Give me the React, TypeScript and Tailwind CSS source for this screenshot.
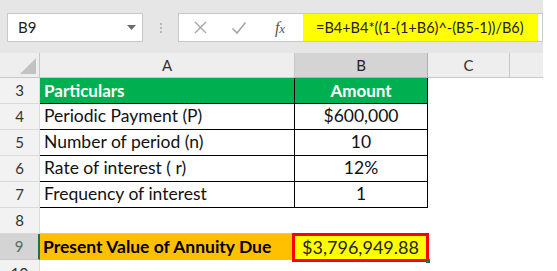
// Excel-style sheet: present value of an annuity due.

const rowHead =
  "flex items-center justify-center border-r border-b border-[#dadada] bg-[#f2f2f2] text-[15px] text-[#333]";

function Check() {
  return (
    <svg width="16" height="14" viewBox="0 0 16 14" fill="none" stroke="#a6a6a6" strokeWidth="1.6">
      <path d="M1.5 7.5 L6 12 L14.5 1.5" />
    </svg>
  );
}

function Cross() {
  return (
    <svg width="13" height="13" viewBox="0 0 13 13" fill="none" stroke="#a6a6a6" strokeWidth="1.4">
      <path d="M1 1 L12 12 M12 1 L1 12" />
    </svg>
  );
}

const rows = [
  { n: "4", a: "Periodic Payment (P)", b: "$600,000" },
  { n: "5", a: "Number of period (n)", b: "10" },
  { n: "6", a: "Rate of interest ( r)", b: "12%" },
  { n: "7", a: "Frequency of interest", b: "1" },
];

export default function App() {
  return (
    <div className="h-[271px] w-[557px] overflow-hidden bg-white font-['Lato','Liberation_Sans',sans-serif]">
      <div className="w-[543px]">
        {/* formula bar */}
        <div className="flex h-[53px] items-start bg-[#e6e6e6] pl-[7px] pt-[13px]">
          <div className="flex h-[29px] w-[136px] items-center justify-between border border-[#c8c8c8] bg-white pl-[10px] pr-[6px]">
            <span className="text-[15px] text-[#222]">B9</span>
            <svg width="9" height="5" viewBox="0 0 9 5">
              <path d="M0 0 H9 L4.5 5 Z" fill="#6b6b6b" />
            </svg>
          </div>
          <div className="flex h-[29px] w-[35px] flex-col items-center justify-center gap-[2px]">
            <span className="h-[2px] w-[2px] bg-[#b8b8b8]" />
            <span className="h-[2px] w-[2px] bg-[#b8b8b8]" />
            <span className="h-[2px] w-[2px] bg-[#b8b8b8]" />
          </div>
          <div className="flex h-[29px] w-[365px] items-center border border-[#c8c8c8] bg-white">
            <div className="flex w-[42px] justify-center pl-[1px]">
              <Cross />
            </div>
            <div className="flex w-[36px] justify-center">
              <Check />
            </div>
            <div className="flex w-[46px] justify-center">
              <span className="font-['Liberation_Serif',serif] text-[16px] italic text-[#555]">
                f<span className="text-[13px]">x</span>
              </span>
            </div>
            <div className="flex h-[27px] w-[235px] items-center bg-[#ffff00] pl-[13px] text-[14.5px] text-[#222]">
              =B4+B4*((1-(1+B6)^-(B5-1))/B6)
            </div>
          </div>
        </div>

        {/* column headers */}
        <div className="flex h-[25px] bg-[#eeeeee] text-[15px] text-[#333]">
          <div className="relative w-[40px] border-r border-b border-[#c8c8c8]">
            <svg className="absolute right-[3px] bottom-[3px]" width="16" height="16" viewBox="0 0 16 16">
              <path d="M16 0 V16 H0 Z" fill="#c2c2c2" />
            </svg>
          </div>
          <div className="flex w-[255px] items-center justify-center border-r border-b border-[#c8c8c8]">A</div>
          <div className="flex w-[133px] items-center justify-center border-r border-b border-[#b0b0b0] bg-[#d4d4d4] text-[#222]">B</div>
          <div className="flex w-[82px] items-center justify-center border-r border-b border-[#c8c8c8]">C</div>
          <div className="w-[33px] border-b border-[#c8c8c8]" />
        </div>

        {/* row 3 */}
        <div className="flex h-[26px]">
          <div className={`w-[40px] ${rowHead}`}>3</div>
          <div className="flex w-[255px] items-center border-r border-b border-black bg-[#00b050] pl-[4px] text-[17px] font-bold text-white">
            Particulars
          </div>
          <div className="flex w-[133px] items-center justify-center border-r border-b border-black bg-[#00b050] text-[17px] font-bold text-white">
            Amount
          </div>
        </div>

        {rows.map((r) => (
          <div key={r.n} className="flex h-[26px]">
            <div className={`w-[40px] ${rowHead}`}>{r.n}</div>
            <div className="flex w-[255px] items-center border-r border-b border-black pl-[4px] text-[17.5px] text-[#111]">
              {r.a}
            </div>
            <div className="flex w-[133px] items-center justify-center border-r border-b border-black text-[17.5px] text-[#111]">
              {r.b}
            </div>
          </div>
        ))}

        {/* row 8 */}
        <div className="flex h-[26px]">
          <div className={`w-[40px] ${rowHead}`}>8</div>
          <div className="w-[255px] border-b border-[#c8c8c8]" />
        </div>

        {/* row 9 */}
        <div className="flex h-[26px]">
          <div className="flex w-[40px] items-center justify-center border-r-2 border-b border-r-[#217346] border-b-[#c8c8c8] bg-[#d4d4d4] text-[15px] text-[#4f6f60]">
            9
          </div>
          <div className="flex w-[252px] items-center bg-[#ffc000] pl-[3px] text-[17.5px] font-bold text-black">
            Present Value of Annuity Due
          </div>
          <div className="relative -mt-[1px] flex h-[29px] w-[137px] items-center justify-center border-[3px] border-[#ff0000] bg-[#ffff00] text-[18px] text-[#222]">
            $3,796,949.88
            <span className="absolute -right-[4px] -bottom-[4px] h-[4px] w-[4px] bg-[#217346]" />
          </div>
        </div>

        {/* row 10 */}
        <div className="flex h-[26px]">
          <div className={`w-[40px] ${rowHead} pt-[2px]`}>10</div>
        </div>
      </div>
    </div>
  );
}
